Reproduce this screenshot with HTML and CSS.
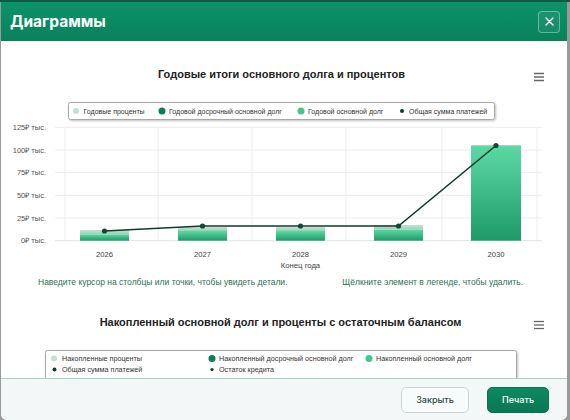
FILE: index.html
```html
<!DOCTYPE html>
<html lang="ru">
<head>
<meta charset="utf-8">
<title>Диаграммы</title>
<link rel="stylesheet" href="styles.css">
</head>
<body>
<div class="modal">
  <header class="modal-header">
    <h1 class="modal-title">Диаграммы</h1>
    <button class="close-btn" aria-label="Закрыть">
      <svg width="9" height="9" viewBox="0 0 9 9"><path d="M1 1L8 8M8 1L1 8" stroke="#fff" stroke-width="1.4" stroke-linecap="round"/></svg>
    </button>
  </header>
  <main class="modal-body">
    <section class="chart">
      <svg class="chart-svg" width="566" height="230" viewBox="1 42 566 230">
        <defs>
          <linearGradient id="gGreen" x1="0" y1="0" x2="0" y2="1">
            <stop offset="0" stop-color="#5cd9a3"/>
            <stop offset="1" stop-color="#1e9a68"/>
          </linearGradient>
          <linearGradient id="gLight" x1="0" y1="0" x2="0" y2="1">
            <stop offset="0" stop-color="#c9dfd3"/>
            <stop offset="1" stop-color="#95d2b4"/>
          </linearGradient>
          <filter id="shadow" x="-5%" y="-30%" width="110%" height="170%">
            <feDropShadow dx="1" dy="1" stdDeviation="0.8" flood-color="#000" flood-opacity="0.25"/>
          </filter>
        </defs>
        <text class="c-title" x="281.5" y="79">Годовые итоги основного долга и процентов</text>
        <g class="burger">
          <line x1="534" y1="74.5" x2="544" y2="74.5"/>
          <line x1="534" y1="78" x2="544" y2="78"/>
          <line x1="534" y1="81.5" x2="544" y2="81.5"/>
        </g>
        <rect class="legend-box" x="68.5" y="103.5" width="426" height="17" rx="2" filter="url(#shadow)"/>
        <circle cx="76" cy="112" r="3" fill="#c6ddd1"/>
        <text class="lg" x="83.5" y="114.6">Годовые проценты</text>
        <circle cx="162" cy="112" r="3.5" fill="#0b7d57"/>
        <text class="lg" x="169" y="114.6">Годовой досрочный основной долг</text>
        <circle cx="301" cy="112" r="3.5" fill="#45c58f"/>
        <text class="lg" x="308" y="114.6">Годовой основной долг</text>
        <circle cx="402" cy="112" r="2" fill="#0e3b2a"/>
        <text class="lg" x="409" y="114.6">Общая сумма платежей</text>

        <g class="grid">
          <line x1="55" y1="128.3" x2="542" y2="128.3"/>
          <line x1="55" y1="151" x2="542" y2="151"/>
          <line x1="55" y1="173.7" x2="542" y2="173.7"/>
          <line x1="55" y1="196.3" x2="542" y2="196.3"/>
          <line x1="55" y1="219" x2="542" y2="219"/>
          <line x1="65" y1="128" x2="65" y2="242"/>
          <line x1="158" y1="128" x2="158" y2="242"/>
          <line x1="252" y1="128" x2="252" y2="242"/>
          <line x1="346" y1="128" x2="346" y2="242"/>
          <line x1="442" y1="128" x2="442" y2="242"/>
          <line x1="537" y1="128" x2="537" y2="242"/>
        </g>
        <line class="axis0" x1="55" y1="241.7" x2="542" y2="241.7"/>
        <g class="ylab">
          <text x="46" y="130.8">125₽ тыс.</text>
          <text x="46" y="153.5">100₽ тыс.</text>
          <text x="46" y="176.2">75₽ тыс.</text>
          <text x="46" y="198.8">50₽ тыс.</text>
          <text x="46" y="221.5">25₽ тыс.</text>
          <text x="46" y="244.2">0₽ тыс.</text>
        </g>
        <g class="bars">
          <rect x="80" y="235.3" width="49" height="6.4" fill="url(#gGreen)"/>
          <rect x="80" y="231" width="49" height="4.3" fill="url(#gLight)"/>
          <rect x="178" y="232" width="49" height="9.7" fill="url(#gGreen)"/>
          <rect x="178" y="228" width="49" height="4" fill="url(#gLight)"/>
          <rect x="276" y="232" width="49" height="9.7" fill="url(#gGreen)"/>
          <rect x="276" y="228" width="49" height="4" fill="url(#gLight)"/>
          <rect x="374" y="230.5" width="49" height="11.2" fill="url(#gGreen)"/>
          <rect x="374" y="226" width="49" height="4.5" fill="url(#gLight)"/>
          <rect x="471" y="147" width="50" height="94.7" fill="url(#gGreen)"/>
          <rect x="471" y="146" width="50" height="1.2" fill="#9ed9bd"/>
        </g>
        <polyline class="sum-line" points="104.5,232 202.5,227 300.5,227 398.5,227 496,146.5"/>
        <g class="pts">
          <circle cx="104.5" cy="232" r="2.6"/>
          <circle cx="202.5" cy="227" r="2.6"/>
          <circle cx="300.5" cy="227" r="2.6"/>
          <circle cx="398.5" cy="227" r="2.6"/>
          <circle cx="496" cy="146.5" r="2.6"/>
        </g>
        <g class="xlab">
          <text x="104.5" y="257.5">2026</text>
          <text x="202.5" y="257.5">2027</text>
          <text x="300.5" y="257.5">2028</text>
          <text x="398.5" y="257.5">2029</text>
          <text x="496" y="257.5">2030</text>
          <text x="300.5" y="268.5">Конец года</text>
        </g>
      </svg>
    </section>
    <div class="hints">
      <p class="hint">Наведите курсор на столбцы или точки, чтобы увидеть детали.</p>
      <p class="hint">Щёлкните элемент в легенде, чтобы удалить.</p>
    </div>
    <section class="chart">
      <svg class="chart-svg" width="566" height="126" viewBox="1 294 566 126">
        <defs>
          <filter id="shadow2" x="-5%" y="-20%" width="110%" height="140%">
            <feDropShadow dx="1" dy="1" stdDeviation="0.8" flood-color="#000" flood-opacity="0.25"/>
          </filter>
        </defs>
        <text class="c-title" x="280.5" y="327">Накопленный основной долг и проценты с остаточным балансом</text>
        <g class="burger">
          <line x1="534" y1="322.5" x2="544" y2="322.5"/>
          <line x1="534" y1="326" x2="544" y2="326"/>
          <line x1="534" y1="329.5" x2="544" y2="329.5"/>
        </g>
        <rect class="legend-box" x="45.5" y="351.5" width="471" height="40" rx="2" filter="url(#shadow2)"/>
        <circle cx="54" cy="359.5" r="3" fill="#c6ddd1"/>
        <text class="lg lg2" x="62" y="362.2">Накопленные проценты</text>
        <circle cx="212" cy="359.5" r="3.5" fill="#0b7d57"/>
        <text class="lg lg2" x="219" y="362.2">Накопленный досрочный основной долг</text>
        <circle cx="369" cy="359.5" r="3.5" fill="#45c58f"/>
        <text class="lg lg2" x="376" y="362.2">Накопленный основной долг</text>
        <circle cx="54.5" cy="370.5" r="2" fill="#0e3b2a"/>
        <text class="lg lg2" x="62" y="373.2">Общая сумма платежей</text>
        <circle cx="212" cy="370.5" r="1.6" fill="#0e3b2a"/>
        <text class="lg lg2" x="219" y="373.2">Остаток кредита</text>
      </svg>
    </section>
  </main>
  <footer class="modal-footer">
    <button class="btn btn-secondary">Закрыть</button>
    <button class="btn btn-primary">Печать</button>
  </footer>
</div>
</body>
</html>
```
FILE: styles.css
```css
html, body {
  margin: 0;
  padding: 0;
}
body {
  width: 570px;
  height: 420px;
  overflow: hidden;
  background: linear-gradient(180deg, #0b5c43 0, #0b5c43 2px, #9a9a9a 2px);
  font-family: "Liberation Sans", Arial, sans-serif;
}
.modal {
  margin: 2px 0 0 1px;
  width: 566px;
  height: 418px;
  display: flex;
  flex-direction: column;
  background: #fff;
  border-radius: 0 0 6px 6px;
  overflow: hidden;
}
.modal-header {
  height: 39px;
  flex: none;
  display: flex;
  align-items: center;
  justify-content: space-between;
  padding: 0 7px 0 9px;
  background: linear-gradient(180deg, #0c936a 0%, #08815b 100%);
}
.modal-title {
  margin: 0;
  font-family: Inter, "Noto Sans", sans-serif;
  font-size: 15.5px;
  font-weight: 700;
  color: #fff;
}
.close-btn {
  width: 22px;
  height: 22px;
  padding: 0;
  display: flex;
  align-items: center;
  justify-content: center;
  background: rgba(255, 255, 255, 0.06);
  border: 1px solid rgba(255, 255, 255, 0.35);
  border-radius: 4px;
}
.modal-body {
  flex: 1;
  overflow: hidden;
  background: #fff;
}
.chart-svg {
  display: block;
}
.c-title {
  font-family: "Liberation Sans", Arial, sans-serif;
  font-size: 11px;
  font-weight: 700;
  fill: #222;
  text-anchor: middle;
}
.burger line {
  stroke: #666;
  stroke-width: 1.3;
}
.legend-box {
  fill: #fff;
  stroke: #a8a8a8;
  stroke-width: 1;
}
.lg {
  font-size: 7px;
  fill: #333;
}
.lg2 {
  font-size: 7.2px;
}
.grid line {
  stroke: #ececec;
  stroke-width: 1;
}
.axis0 {
  stroke: #e2e2e2;
  stroke-width: 1;
}
.ylab text {
  font-size: 7.5px;
  fill: #555;
  text-anchor: end;
}
.xlab text {
  font-size: 7.7px;
  fill: #444;
  text-anchor: middle;
}
.sum-line {
  fill: none;
  stroke: #0e3b2a;
  stroke-width: 1.6;
}
.pts circle {
  fill: #0e4a33;
}
.hints {
  height: 22px;
  display: flex;
  align-items: center;
  justify-content: space-between;
  padding: 0 44px 0 37px;
}
.hint {
  margin: 0;
  font-size: 8.5px;
  color: #2a7054;
}
.modal-footer {
  flex: none;
  height: 41px;
  border-top: 1px solid #a9d4c1;
  background: #f4f7f8;
  display: flex;
  align-items: center;
  justify-content: flex-end;
  gap: 18px;
  padding: 0 18px 0 0;
}
.btn {
  height: 26px;
  border-radius: 5px;
  font-family: Inter, "Noto Sans", sans-serif;
  font-size: 9px;
  font-weight: 500;
  padding: 0;
}
.btn-secondary {
  width: 68px;
  background: #f8fbfb;
  border: 1px solid #c7d5d9;
  color: #2f4a45;
}
.btn-primary {
  width: 62px;
  background: linear-gradient(180deg, #0d8a62, #0a7754);
  border: 1px solid #0a7452;
  color: #fff;
}
```
